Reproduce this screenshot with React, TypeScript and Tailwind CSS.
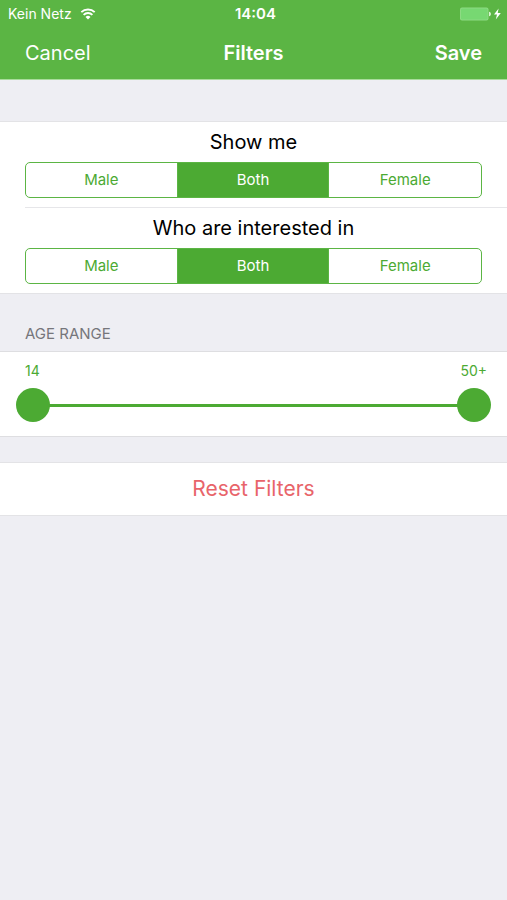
import { useState } from "react";

const OPTIONS = ["Male", "Both", "Female"];

function StatusBar() {
  return (
    <div className="grid h-7 grid-cols-3 items-center pr-1 pl-2 text-sm leading-4">
      <div className="flex items-center gap-2">
        <span>Kein Netz</span>
        <svg viewBox="0 0 16 12" className="h-3 w-4" fill="none" stroke="currentColor" strokeWidth="1.9" aria-hidden="true">
          <path d="M1.3 4.2a9.5 9.5 0 0 1 13.4 0" />
          <path d="M3.6 6.9a6.2 6.2 0 0 1 8.8 0" />
          <path d="M8 11.5 5.5 9a3.5 3.5 0 0 1 5 0Z" fill="currentColor" stroke="none" />
        </svg>
      </div>
      <span className="text-center text-[15px] font-semibold">14:04</span>
      <svg viewBox="0 0 44 14" className="h-[14px] w-11 justify-self-end" aria-hidden="true">
        <rect x="1" y="0.5" width="28.5" height="13" rx="2" fill="#8ddb83" />
        <rect x="2" y="1.5" width="26.5" height="11" rx="1" fill="#77d872" />
        <path d="M30 4.8c2.6.3 2.6 4.1 0 4.4Z" fill="#d9f3d4" />
        <path d="M39.6 1.5 35 7.6h3L36.8 12.5 41.8 6.1h-3.1Z" fill="#fff" />
      </svg>
    </div>
  );
}

function Segmented({ title, name }: { title: string; name: string }) {
  const [value, setValue] = useState("Both");
  return (
    <fieldset className="pr-[25px] pb-[9px]">
      <legend className="h-10 w-full pt-1 text-center text-xl leading-8 text-black">{title}</legend>
      <div className="grid h-9 grid-cols-3 divide-x divide-[#5bb544] overflow-hidden rounded-[5px] border border-[#5bb544]">
        {OPTIONS.map((option) => (
          <label
            key={option}
            className="flex cursor-pointer items-center justify-center text-[15px] text-[#4caa33] has-checked:bg-[#4caa33] has-checked:text-white"
          >
            <input
              type="radio"
              name={name}
              value={option}
              checked={value === option}
              onChange={() => setValue(option)}
              className="sr-only"
            />
            {option}
          </label>
        ))}
      </div>
    </fieldset>
  );
}

const THUMB =
  "pointer-events-none col-start-1 row-start-1 h-[34px] w-full appearance-none bg-transparent [&::-webkit-slider-thumb]:pointer-events-auto [&::-webkit-slider-thumb]:size-[34px] [&::-webkit-slider-thumb]:appearance-none [&::-webkit-slider-thumb]:rounded-full [&::-webkit-slider-thumb]:bg-[#4caa33]";

function AgeRange() {
  const [low, setLow] = useState(14);
  const [high, setHigh] = useState(50);
  return (
    <section className="border-y border-[#dedee1] bg-white px-4 pt-[9px] pb-[14px]">
      <div className="flex justify-between pr-1 pl-[9px] text-sm leading-5 text-[#4caa33]">
        <label htmlFor="age-low">{low}</label>
        <label htmlFor="age-high">{high === 50 ? "50+" : high}</label>
      </div>
      <div className="mt-[7px] grid items-center">
        <div className="col-start-1 row-start-1 mx-4 h-[3px] bg-[#4caa33]" />
        <input
          id="age-low"
          type="range"
          min={14}
          max={50}
          value={low}
          onChange={(e) => setLow(Math.min(Number(e.target.value), high))}
          className={THUMB}
        />
        <input
          id="age-high"
          type="range"
          min={14}
          max={50}
          value={high}
          onChange={(e) => setHigh(Math.max(Number(e.target.value), low))}
          className={THUMB}
        />
      </div>
    </section>
  );
}

export default function App() {
  return (
    <div className="min-h-screen bg-[#eeeef3] font-['Inter','Liberation_Sans',sans-serif]">
      <header className="border-b border-[#a9dc9c] bg-[#5bb544] text-white">
        <StatusBar />
        <div className="grid h-[51px] grid-cols-3 items-center px-[25px] pb-[2px] text-xl">
          <button type="button" className="justify-self-start">Cancel</button>
          <h1 className="text-center font-semibold">Filters</h1>
          <button type="button" className="justify-self-end font-semibold">Save</button>
        </div>
      </header>
      <main>
        <section className="mt-[41px] border-y border-[#e3e3e6] bg-white pl-[25px]">
          <Segmented title="Show me" name="show" />
          <div className="border-t border-[#e6e6e9]">
            <Segmented title="Who are interested in" name="interest" />
          </div>
        </section>
        <h2 className="mt-[30px] mb-[7px] px-[25px] text-[15px] leading-5 text-[#76767b]">AGE RANGE</h2>
        <AgeRange />
        <button
          type="button"
          className="mt-[25px] block h-[54px] w-full border-y border-[#e3e3e6] bg-white text-center text-[21px] text-[#e8646a]"
        >
          Reset Filters
        </button>
      </main>
    </div>
  );
}
